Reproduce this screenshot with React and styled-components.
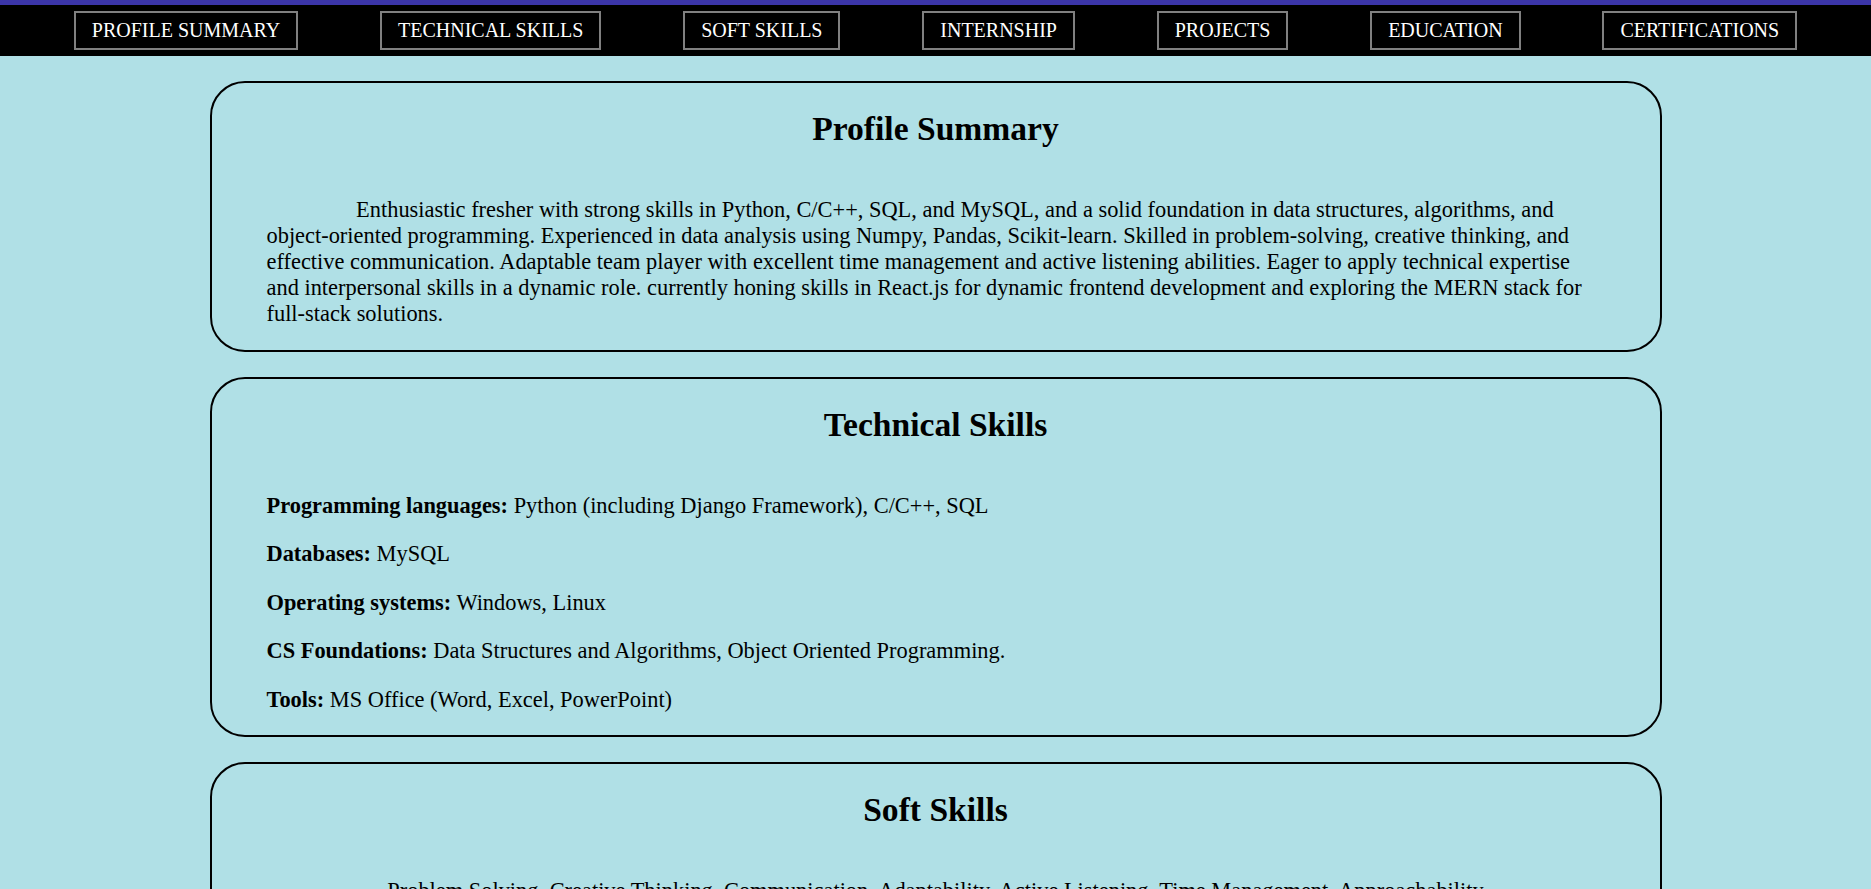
import React from "react";
import styled, { createGlobalStyle } from "styled-components";

const GlobalStyle = createGlobalStyle`
  body {
    margin: 0;
    background-color: #b0e0e6;
    font-family: "Liberation Serif", "Times New Roman", serif;
    color: #000;
  }
`;

const Navbar = styled.nav`
  display: flex;
  justify-content: space-evenly;
  align-items: center;
  background-color: #000;
  border-top: 5px solid #3b35a8;
  padding: 6px 0;
`;

const NavLink = styled.a`
  margin: 0 8px;
  padding: 6px 16px;
  border: 2px solid #808080;
  color: #fff;
  font-size: 20px;
  text-transform: uppercase;
  text-decoration: none;
  white-space: nowrap;
`;

const Main = styled.main`
  padding: 25px 0 1px;
`;

const Card = styled.section`
  box-sizing: border-box;
  width: 1452px;
  margin: 0 auto 25px;
  padding: 0 55px;
  border: 2px solid #000;
  border-radius: 35px;
  font-size: 22.4px;
`;

const Title = styled.h2`
  margin: 27px 0 49px;
  font-size: 1.5em;
  font-weight: bold;
  text-align: center;
`;

const Text = styled.p`
  margin: 22.4px 0 23px;
  text-align: ${(p) => (p.$center ? "center" : "left")};
  text-indent: ${(p) => (p.$indent ? "4em" : "0")};
`;

const SkillList = styled.div`
  margin-bottom: 22px;
`;

const SkillLine = styled.p`
  margin: 22.4px 0;
`;

const links = [
  { id: "summary", label: "Profile Summary" },
  { id: "technical", label: "Technical Skills" },
  { id: "soft", label: "Soft Skills" },
  { id: "internship", label: "Internship" },
  { id: "projects", label: "Projects" },
  { id: "education", label: "Education" },
  { id: "certifications", label: "Certifications" },
];

const technicalSkills = [
  { label: "Programming languages:", value: "Python (including Django Framework), C/C++, SQL" },
  { label: "Databases:", value: "MySQL" },
  { label: "Operating systems:", value: "Windows, Linux" },
  { label: "CS Foundations:", value: "Data Structures and Algorithms, Object Oriented Programming." },
  { label: "Tools:", value: "MS Office (Word, Excel, PowerPoint)" },
];

const App = () => {
  return (
    <>
      <GlobalStyle />
      <Navbar>
        {links.map((link) => (
          <NavLink key={link.id} href={`#${link.id}`}>
            {link.label}
          </NavLink>
        ))}
      </Navbar>
      <Main>
        <Card id="summary">
          <Title>Profile Summary</Title>
          <Text $indent>
            Enthusiastic fresher with strong skills in Python, C/C++, SQL, and MySQL, and a solid foundation in data
            structures, algorithms, and object-oriented programming. Experienced in data analysis using Numpy, Pandas,
            Scikit-learn. Skilled in problem-solving, creative thinking, and effective communication. Adaptable team
            player with excellent time management and active listening abilities. Eager to apply technical expertise
            and interpersonal skills in a dynamic role. currently honing skills in React.js for dynamic frontend
            development and exploring the MERN stack for full-stack solutions.
          </Text>
        </Card>

        <Card id="technical">
          <Title>Technical Skills</Title>
          <SkillList>
            {technicalSkills.map((skill) => (
              <SkillLine key={skill.label}>
                <strong>{skill.label}</strong> {skill.value}
              </SkillLine>
            ))}
          </SkillList>
        </Card>

        <Card id="soft">
          <Title>Soft Skills</Title>
          <Text $center>
            Problem Solving, Creative Thinking, Communication, Adaptability, Active Listening, Time Management,
            Approachability
          </Text>
        </Card>
      </Main>
    </>
  );
};

export default App;
